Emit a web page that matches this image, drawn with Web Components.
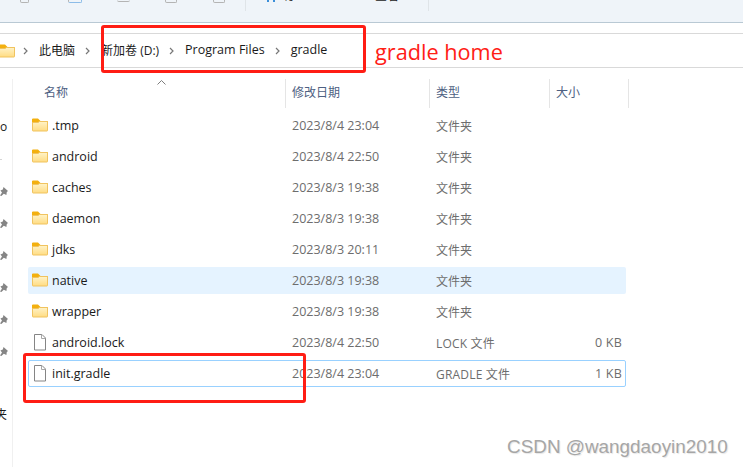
<!DOCTYPE html>
<html lang="zh">
<head>
<meta charset="utf-8">
<title>gradle</title>
<style>
  html, body { margin: 0; height: 100%; background: #fff; overflow: hidden; }
  body { font: 12px "Open Sans", "Noto Sans CJK SC", sans-serif; color: #1a1a1a; }
  #app { position: relative; width: 743px; height: 467px; overflow: hidden; }
</style>
</head>
<body>
<template id="folder-icon">
  <svg width="16" height="14" viewBox="0 0 16 14">
    <defs><linearGradient id="fg" x1="0" y1="0" x2="0" y2="1"><stop offset="0" stop-color="#fff3c8"/><stop offset="1" stop-color="#ffdc82"/></linearGradient></defs>
    <path d="M0 2a1 1 0 0 1 1-1.500h5l2.500 2.500H15a1 1 0 0 1 1 1V6H0z" fill="#f3b00f"/>
    <path d="M.5 4.500H6l1.500-1H15a.5.5 0 0 1 .5.5v8.500a.5.5 0 0 1-.5.5H1a.5.5 0 0 1-.5-.5z" fill="url(#fg)" stroke="#f0c35f"/>
  </svg>
</template>
<template id="file-icon">
  <svg width="14" height="17" viewBox="0 0 14 17" fill="none">
    <path d="M1.500.5h7.500l3.500 3.500v12h-11z" fill="#fff" stroke="#858585"/>
    <path d="M8.500.5v4h4" stroke="#a8a8a8"/>
  </svg>
</template>

<div id="app">
  <fx-toolbar></fx-toolbar>
  <fx-breadcrumb>
    <span>此电脑</span><span>新加卷 (D:)</span><span>Program Files</span><span>gradle</span>
  </fx-breadcrumb>
  <fx-body>
    <fx-sidebar slot="side"></fx-sidebar>
    <fx-header></fx-header>
    <fx-row kind="folder" name=".tmp" date="2023/8/4 23:04" type="文件夹"></fx-row>
    <fx-row kind="folder" name="android" date="2023/8/4 22:50" type="文件夹"></fx-row>
    <fx-row kind="folder" name="caches" date="2023/8/3 19:38" type="文件夹"></fx-row>
    <fx-row kind="folder" name="daemon" date="2023/8/3 19:38" type="文件夹"></fx-row>
    <fx-row kind="folder" name="jdks" date="2023/8/3 20:11" type="文件夹"></fx-row>
    <fx-row kind="folder" name="native" date="2023/8/3 19:38" type="文件夹" state="hover"></fx-row>
    <fx-row kind="folder" name="wrapper" date="2023/8/3 19:38" type="文件夹"></fx-row>
    <fx-row kind="file" name="android.lock" date="2023/8/4 22:50" type="LOCK 文件" size="0 KB"></fx-row>
    <fx-row kind="file" name="init.gradle" date="2023/8/4 23:04" type="GRADLE 文件" size="1 KB" state="focus"></fx-row>
  </fx-body>

  <!-- hand drawn notes that lie over the window -->
  <red-box style="left:101px;top:25px;width:265px;height:48px"></red-box>
  <red-box style="left:23px;top:353px;width:283px;height:50px"></red-box>
  <red-note style="left:375px;top:37px">gradle home</red-note>
  <water-mark style="left:507px;top:436px">CSDN @wangdaoyin2010</water-mark>
</div>

<script>
// Toolbar is cut by the top of the picture: only the feet of its icons show
class FxToolbar extends HTMLElement {
  constructor() {
    super();
    this.attachShadow({ mode: 'open' });
    this.shadowRoot.innerHTML = `
      <style>
        :host { display: flex; box-sizing: border-box; height: 23px; background: #eff4f9; border-bottom: 1px solid #b9c9d4; overflow: hidden; }
        .foot { height: 3px; box-sizing: border-box; border: 1px solid #b4b4b4; border-top: 0; border-radius: 0 0 2px 2px; }
        .sep { width: 1px; height: 11px; background: #dfe4e8; }
        .dots { display: flex; gap: 4px; height: 3px; }
        .dots i { width: 2px; height: 2px; background: #3b8fd9; }
        .clip { height: 3px; display: flex; align-items: flex-end; overflow: hidden; font-size: 12px; line-height: 14px; color: #1a1a1a; }
      </style>
      <div class="foot" style="margin-left:20px;width:9px"></div>
      <div class="foot" style="margin-left:39px;width:14px;border-right-color:#8cbce8;border-bottom-color:#8cbce8"></div>
      <div class="foot" style="margin-left:35px;width:13px;border-width:0 0 1px 0;height:2px"></div>
      <div class="foot" style="margin-left:35px;width:12px"></div>
      <div class="foot" style="margin-left:36px;width:12px"></div>
      <div class="sep" style="margin-left:20px"></div>
      <div class="dots" style="margin-left:21px"><i></i><i></i></div>
      <div class="clip" style="margin-left:10px;width:22px">排序</div>
      <div class="clip" style="margin-left:68px;width:24px">查看</div>
      <div class="sep" style="margin-left:29px"></div>
    `;
  }
}

class FxBreadcrumb extends HTMLElement {
  constructor() {
    super();
    this.attachShadow({ mode: 'open' });
    this.shadowRoot.innerHTML = `
      <style>
        :host { display: flex; box-sizing: border-box; margin-top: 10px; height: 35px; border: solid #d9d9d9; border-width: 1px 0; align-items: center; overflow: hidden; color: #1a1a1a; }
        .folder { margin-left: -1px; display: flex; }
        .crumbs { display: flex; align-items: center; }
        svg.chev { flex: none; margin: 0 11px 0 10px; }
        svg.chev:first-child { margin: 0 11px 0 8px; }
        .latin { font-size: 12.5px; }
        span { white-space: nowrap; position: relative; top: -1px; }
      </style>
      <div class="folder"></div>
      <div class="crumbs"></div>
      <slot hidden></slot>
    `;
    this.shadowRoot.querySelector('.folder').append(document.getElementById('folder-icon').content.cloneNode(true));
  }

  connectedCallback() {
    const crumbs = this.shadowRoot.querySelector('.crumbs');
    const chev = '<svg class="chev" width="5" height="8" viewBox="0 0 5 8" fill="none"><path d="M1 1l3 3-3 3" stroke="#777" stroke-width="1.200"/></svg>';
    [...this.querySelectorAll('span')].forEach(span => {
      crumbs.insertAdjacentHTML('beforeend', chev);
      const label = document.createElement('span');
      label.textContent = span.textContent;
      if (/^[\x00-\x7f]+$/.test(label.textContent)) label.className = 'latin';
      crumbs.append(label);
    });
  }
}

// Main area: narrow nav pane on the left, details list on the right
class FxBody extends HTMLElement {
  constructor() {
    super();
    this.attachShadow({ mode: 'open' });
    this.shadowRoot.innerHTML = `
      <style>
        :host { display: flex; margin-top: 11px; height: 388px; }
        .side { flex: none; width: 12px; border-right: 1px solid #f0f0f0; }
        .list { flex: 1; padding-left: 15px; display: flex; flex-direction: column; gap: 4px; }
      </style>
      <div class="side"><slot name="side"></slot></div>
      <div class="list"><slot></slot></div>
    `;
  }
}

class FxSidebar extends HTMLElement {
  constructor() {
    super();
    this.attachShadow({ mode: 'open' });
    const pin = `<svg width="8" height="9" viewBox="0 0 8 9"><path d="M3.500 0L8 4 6.800 5 6.400 8 3.800 6.800 1.400 9 0 8.400 2 5.400 .4 3.600 2.800 2.600z" fill="#858585"/></svg>`;
    const items = ['o', '', pin, pin, pin, pin, pin, pin, '', '夹'];
    this.shadowRoot.innerHTML = `
      <style>
        :host { display: block; width: 12px; overflow: hidden; padding-top: 32px; }
        .item { height: 32px; width: 12px; display: flex; align-items: center; overflow: hidden; color: #1a1a1a; }
        .item span { line-height: 16px; }
        .cut { margin-left: -5px; }
        .rule { width: 2px; height: 1px; background: #d5d5d5; }
      </style>
      ${items.map(it => `<div class="item">${it === 'o' ? '<span>o</span>' : it === '夹' ? '<span class="cut">夹</span>' : it}</div>`).join('')}
    `;
    this.shadowRoot.children[2].innerHTML = '<div class="rule"></div>';
  }
}

class FxHeader extends HTMLElement {
  constructor() {
    super();
    this.attachShadow({ mode: 'open' });
    this.shadowRoot.innerHTML = `
      <style>
        :host { display: grid; grid-template-columns: 257px 144px 120px 80px; height: 29px; color: #4d6082; }
        .col { position: relative; border-left: 1px solid #e5e5e5; padding: 6px 0 0 6px; line-height: 16px; }
        .col:first-of-type { border-left: 0; padding-left: 16px; }
        .col:last-child { border-right: 1px solid #e5e5e5; }
        svg { position: absolute; left: 129px; top: 1px; }
      </style>
      <div class="col">名称<svg width="9" height="5" viewBox="0 0 9 5" fill="none"><path d="M.5 4.500l4-4 4 4" stroke="#7d7d7d"/></svg></div>
      <div class="col">修改日期</div>
      <div class="col">类型</div>
      <div class="col">大小</div>
    `;
  }
}

class FxRow extends HTMLElement {
  constructor() {
    super();
    this.attachShadow({ mode: 'open' });
    this.shadowRoot.innerHTML = `
      <style>
        :host { display: grid; box-sizing: border-box; width: 598px; height: 27px; grid-template-columns: 256px 144px 120px 76px; align-items: center; border: 1px solid transparent; border-radius: 2px; color: #6d6d6d; }
        :host([state="hover"]) { background: #e5f3ff; }
        :host([state="focus"]) { border-color: #99d1ff; }
        .name { display: flex; align-items: center; color: #1a1a1a; margin-left: 3px; font-size: 12.5px; }
        .icon { width: 16px; height: 17px; display: flex; align-items: center; justify-content: center; margin-right: 4px; }
        :host([kind="folder"]) .icon { padding-bottom: 1px; height: 16px; }
        .date { padding-left: 7px; font-size: 12.5px; }
        .type { padding-left: 7px; }
        :host([kind="file"]) .type { letter-spacing: .2px; }
        .size { text-align: right; padding-right: 3px; font-size: 12.5px; letter-spacing: .2px; }
      </style>
      <div class="name"><span class="icon"></span><span class="label"></span></div>
      <div class="date"></div>
      <div class="type"></div>
      <div class="size"></div>
    `;
  }

  connectedCallback() {
    const root = this.shadowRoot;
    const tpl = this.getAttribute('kind') === 'file' ? 'file-icon' : 'folder-icon';
    root.querySelector('.icon').append(document.getElementById(tpl).content.cloneNode(true));
    root.querySelector('.label').textContent = this.getAttribute('name');
    root.querySelector('.date').textContent = this.getAttribute('date');
    root.querySelector('.type').textContent = this.getAttribute('type');
    root.querySelector('.size').textContent = this.getAttribute('size') || '';
  }
}

class RedBox extends HTMLElement {
  constructor() {
    super();
    this.attachShadow({ mode: 'open' });
    this.shadowRoot.innerHTML = `
      <style>
        :host { position: absolute; box-sizing: border-box; border: 3px solid #ff1d14; border-radius: 3px; }
      </style>
    `;
  }
}

class RedNote extends HTMLElement {
  constructor() {
    super();
    this.attachShadow({ mode: 'open' });
    this.shadowRoot.innerHTML = `
      <style>
        :host { position: absolute; font: 21.7px/30px "Open Sans", sans-serif; color: #ff2015; white-space: nowrap; }
      </style>
      <slot></slot>
    `;
  }
}

class WaterMark extends HTMLElement {
  constructor() {
    super();
    this.attachShadow({ mode: 'open' });
    this.shadowRoot.innerHTML = `
      <style>
        :host { position: absolute; font: 18.9px/22px "Liberation Sans", sans-serif; color: #a6a6a6; white-space: nowrap; text-shadow: 1px 1px 1px rgba(0,0,0,.1); }
      </style>
      <slot></slot>
    `;
  }
}

customElements.define('fx-toolbar', FxToolbar);
customElements.define('fx-breadcrumb', FxBreadcrumb);
customElements.define('fx-body', FxBody);
customElements.define('fx-sidebar', FxSidebar);
customElements.define('fx-header', FxHeader);
customElements.define('fx-row', FxRow);
customElements.define('red-box', RedBox);
customElements.define('red-note', RedNote);
customElements.define('water-mark', WaterMark);
</script>
</body>
</html>
